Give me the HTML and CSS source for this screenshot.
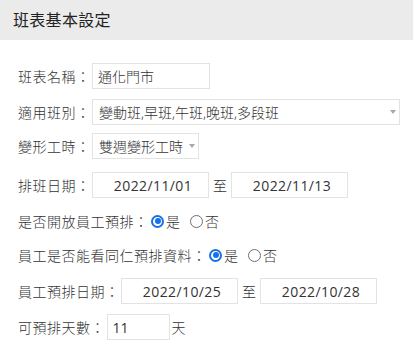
FILE: index.html
```html
<!DOCTYPE html>
<html lang="zh-Hant">
<head>
<meta charset="utf-8">
<title>班表基本設定</title>
<link rel="stylesheet" href="styles.css">
</head>
<body>
<div class="panel">
  <div class="panel-head">班表基本設定</div>
  <div class="form">
    <div class="row gap10">
      <span class="lbl">班表名稱：</span>
      <div class="field w-name">通化門市</div>
    </div>
    <div class="row gap8">
      <span class="lbl">適用班別：</span>
      <div class="field select w-wide"><span class="sel-text">變動班,早班,午班,晚班,多段班</span><span class="caret"></span></div>
    </div>
    <div class="row gap13">
      <span class="lbl">變形工時：</span>
      <div class="field select"><span class="sel-text">雙週變形工時</span><span class="caret"></span></div>
    </div>
    <div class="row gap10">
      <span class="lbl">排班日期：</span>
      <div class="field date">2022/11/01</div>
      <span class="to">至</span>
      <div class="field date">2022/11/13</div>
    </div>
    <div class="row gap8">
      <span class="lbl">是否開放員工預排：</span>
      <span class="opt"><span class="radio on"></span>是</span>
      <span class="opt"><span class="radio"></span>否</span>
    </div>
    <div class="row gap10">
      <span class="lbl">員工是否能看同仁預排資料：</span>
      <span class="opt"><span class="radio on"></span>是</span>
      <span class="opt"><span class="radio"></span>否</span>
    </div>
    <div class="row gap10">
      <span class="lbl">員工預排日期：</span>
      <div class="field date">2022/10/25</div>
      <span class="to">至</span>
      <div class="field date">2022/10/28</div>
    </div>
    <div class="row">
      <span class="lbl">可預排天數：</span>
      <div class="field w-days">11</div>
      <span class="unit">天</span>
    </div>
  </div>
</div>
</body>
</html>
```

FILE: styles.css
```css
* { box-sizing: border-box; }

html, body {
  margin: 0;
  padding: 0;
  background: #ffffff;
}

body {
  font-family: "Open Sans", "Noto Sans CJK TC", sans-serif;
  font-size: 14px;
  color: #333333;
}

.panel {
  width: 413px;
}

.panel-head {
  height: 40px;
  line-height: 40px;
  padding-left: 13px;
  background: #ebebeb;
  font-size: 16px;
  letter-spacing: 0.3px;
  color: #222222;
}

.form {
  padding: 23px 0 0 18px;
}

.row {
  display: flex;
  align-items: center;
  height: 26px;
  white-space: nowrap;
}

.gap8 { margin-bottom: 8px; }
.gap10 { margin-bottom: 10px; }
.gap13 { margin-bottom: 13px; }

.lbl {
  letter-spacing: 0.5px;
  margin-right: 1.5px;
  font-weight: 300;
}

.field {
  height: 26px;
  border: 1px solid #e3e3e3;
  background: #ffffff;
  display: flex;
  align-items: center;
  padding-left: 5px;
  color: #333333;
}

.w-name { width: 118px; }
.w-wide { width: 308px; }
.w-days { width: 63px; }

.select {
  padding-left: 6px;
  padding-right: 3px;
}

.sel-text {
  flex: 1;
  font-weight: 300;
}

.w-name {
  font-weight: 300;
}

.caret {
  width: 0;
  height: 0;
  margin-left: 6px;
  border-left: 3.5px solid transparent;
  border-right: 3.5px solid transparent;
  border-top: 4px solid #a8a8a8;
}

.date {
  width: 117px;
  justify-content: center;
  letter-spacing: 0.4px;
}

.to, .unit, .opt {
  font-weight: 300;
}

.to {
  margin: 0 4px;
}

.unit {
  margin-left: 2px;
}

.opt {
  display: inline-flex;
  align-items: center;
  margin-right: 9px;
}

.radio {
  width: 13px;
  height: 13px;
  border-radius: 50%;
  border: 1px solid #6f6f6f;
  background: #ffffff;
  margin-left: 1px;
  margin-right: 2px;
  position: relative;
}

.radio.on {
  border: 2px solid #1671e8;
}

.radio.on::after {
  content: "";
  position: absolute;
  left: 1.5px;
  top: 1.5px;
  width: 6px;
  height: 6px;
  border-radius: 50%;
  background: #1671e8;
}
```
